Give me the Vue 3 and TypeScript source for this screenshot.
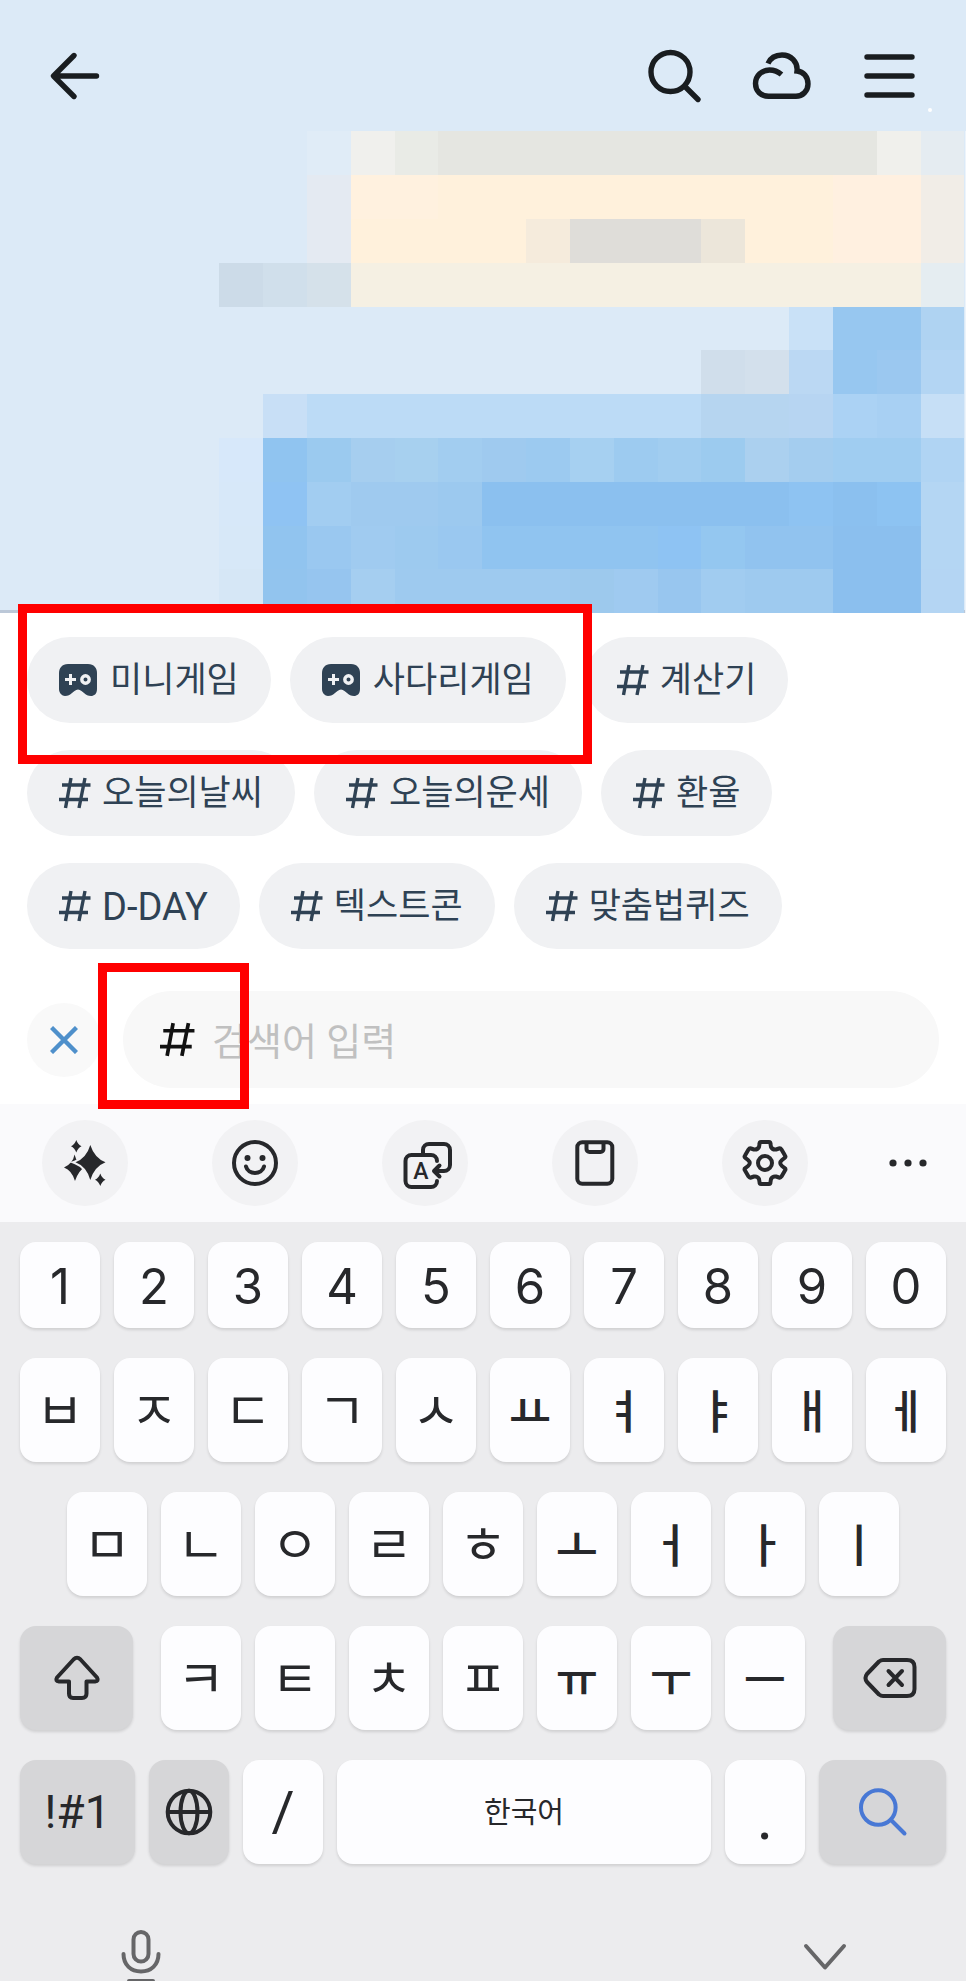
<script setup lang="ts">
import { ref } from 'vue'

interface Tile { x: number; y: number; w: number; h: number; c: string }
interface Chip { label: string; kind?: 'game' | 'latin' }
interface Key { label: string; icon?: string; kind?: string; name?: string }

const query = ref('')

const tiles: Tile[] = []
const add = (y: number, runs: [number, number, string][], h = 1) => {
  for (const [x, w, c] of runs) tiles.push({ x, y, w, h, c })
}
add(3, [[7, 1, '#e0ecf7'], [8, 1, '#f0f0ed'], [9, 1, '#e9ebe6'], [10, 10, '#e5e6e1'], [20, 1, '#f0f0ec'], [21, 1, '#e5ecf1']])
add(4, [[7, 1, '#e4eaf2'], [8, 2, '#fff1df'], [10, 9, '#fff1dc'], [19, 2, '#fff0e0'], [21, 1, '#f1ede7']])
add(5, [[7, 1, '#e4eaf2'], [8, 4, '#fff1dc'], [12, 1, '#f5ebdc'], [13, 3, '#dfddd9'], [16, 1, '#ece6da'], [17, 2, '#fff1dc'], [19, 2, '#fff0e0'], [21, 1, '#f1ede7']])
add(6, [[5, 1, '#ccdbe8'], [6, 1, '#d0dfeb'], [7, 1, '#d5e1ea'], [8, 13, '#f5f0e3'], [21, 1, '#e5edf1']])
add(7, [[18, 1, '#c9e1f7'], [19, 2, '#97c7f0'], [21, 1, '#afd3f2']])
add(8, [[16, 1, '#d0deeb'], [17, 1, '#d3e0ec'], [18, 1, '#bbd8f3'], [19, 1, '#97c7f0'], [20, 1, '#9bc8f0'], [21, 1, '#b3d5f3']])
add(9, [[6, 1, '#c8dff6'], [7, 9, '#bcdbf6'], [16, 2, '#b6d5f0'], [18, 1, '#b7d5f2'], [19, 1, '#abd2f4'], [20, 1, '#a8d0f3'], [21, 1, '#c6dff6']])
add(10, [[5, 1, '#d7e8fa'], [6, 1, '#90c4f0'], [7, 1, '#9bcaef'], [8, 1, '#a6ceef'], [9, 1, '#a7d0ef'], [10, 1, '#a2cdf0'], [11, 1, '#9fcaef'], [12, 1, '#9ccaf0'], [13, 1, '#a6d0f1'], [14, 1, '#9dcbf0'], [15, 1, '#a1cdf0'], [16, 1, '#9ccbef'], [17, 1, '#abd0ef'], [18, 1, '#a4cdef'], [19, 2, '#a0cdf1'], [21, 1, '#b0d4f3']])
add(11, [[5, 1, '#d7e8f9'], [6, 1, '#8fc3f3'], [7, 1, '#a2cdf1'], [8, 2, '#9fcaef'], [10, 1, '#9cc9ef'], [11, 7, '#8bc0ef'], [18, 1, '#8ec3f2'], [19, 1, '#8bc0ef'], [20, 1, '#8dc3f2'], [21, 1, '#b4d6f3']])
add(12, [[5, 1, '#d7e8f8'], [6, 1, '#91c4ef'], [7, 1, '#9ac8f0'], [8, 1, '#a0cbf0'], [9, 1, '#9dcaef'], [10, 1, '#9ac8f0'], [11, 4, '#90c4f0'], [15, 1, '#8ec3f3'], [16, 1, '#94c7f0'], [17, 2, '#91c3ef'], [19, 2, '#8bbfee'], [21, 1, '#b4d6f3']])
add(13, [[5, 1, '#d6e7f6'], [6, 1, '#92c4ee'], [7, 1, '#96c5ef'], [8, 1, '#a5cef0'], [9, 4, '#9ecaef'], [13, 1, '#9dc9ed'], [14, 1, '#9fcaf0'], [15, 1, '#98c6ef'], [16, 1, '#a1ccf0'], [17, 2, '#9ecaef'], [19, 2, '#8bbfee'], [21, 1, '#b4d5f3']])

const chips: Chip[] = [
  { label: '미니게임', kind: 'game' },
  { label: '사다리게임', kind: 'game' },
  { label: '계산기' },
  { label: '오늘의날씨' },
  { label: '오늘의운세' },
  { label: '환율' },
  { label: 'D-DAY', kind: 'latin' },
  { label: '텍스트콘' },
  { label: '맞춤법퀴즈' },
]

const plain = (text: string, kind = ''): Key[] => [...text].map((label) => ({ label, kind }))

const rows: { name: string; keys: Key[] }[] = [
  { name: 'digits', keys: plain('1234567890', 'digit') },
  { name: 'letters', keys: [...plain('ㅂㅈㄷㄱㅅ', 'jamo'), ...plain('ㅛㅕㅑㅐㅔ', 'jamo vowel')] },
  { name: 'letters inset', keys: [...plain('ㅁㄴㅇㄹㅎ', 'jamo'), ...plain('ㅗㅓㅏㅣ', 'jamo vowel')] },
  {
    name: 'letters',
    keys: [
      { label: '', icon: 'shift', kind: 'dark side first', name: 'Shift' },
      ...plain('ㅋㅌㅊㅍ', 'jamo'),
      ...plain('ㅠㅜㅡ', 'jamo vowel'),
      { label: '', icon: 'erase', kind: 'dark side last', name: '지우기' },
    ],
  },
  {
    name: 'letters',
    keys: [
      { label: '!#1', kind: 'dark symbols' },
      { label: '', icon: 'globe', kind: 'dark', name: '언어 변경' },
      { label: '/', kind: 'slash' },
      { label: '한국어', kind: 'space' },
      { label: '.', kind: 'dot' },
      { label: '', icon: 'search', kind: 'dark enter', name: '검색' },
    ],
  },
]
</script>

<template>
  <main class="page">
    <section class="chat">
      <svg class="mosaic" viewBox="0 0 966 613" preserveAspectRatio="none" aria-hidden="true">
        <rect width="966" height="613" fill="#dceaf7" />
        <rect y="610" width="966" height="3" fill="#bcc8d8" />
        <g transform="scale(43.84 43.8)" shape-rendering="crispEdges">
          <rect v-for="(t, i) in tiles" :key="i" :x="t.x" :y="t.y" :width="t.w" :height="t.h" :fill="t.c" />
        </g>
        <rect x="965" y="131" width="1" height="482" fill="#edf4fb" />
        <circle cx="930" cy="110" r="2" fill="#fff" />
      </svg>
      <header class="topbar">
        <button class="icon-btn back" aria-label="뒤로">
          <svg class="line" viewBox="0 0 64 64"><path d="M53.500 32H11M31 11.500L10.500 32L31 52.500" /></svg>
        </button>
        <button class="icon-btn" aria-label="검색">
          <svg class="line" viewBox="0 0 64 64"><circle cx="28.500" cy="28" r="19.500" /><path d="M43 42.500L56 55.500" /></svg>
        </button>
        <button class="icon-btn" aria-label="클라우드">
          <svg class="line butt" viewBox="0 0 64 64">
            <path d="M18 19.500C20.500 14 26 11 32 11C41 11 48 18 47 27C53.500 27.500 58 33 58 40C58 47 52.500 52.300 46 52.300H18.500C11 52.300 5.500 47 5.500 39.500C5.500 31.500 12 26 19.500 26C24 26 28 27.500 31.500 30.500" />
          </svg>
        </button>
        <button class="icon-btn" aria-label="메뉴">
          <svg class="line" viewBox="0 0 64 64"><path d="M9 13H54M9 32H54M9 51H54" /></svg>
        </button>
      </header>
    </section>

    <section class="panel">
      <div class="chips">
        <button v-for="c in chips" :key="c.label" class="chip" :class="c.kind">
          <svg v-if="c.kind === 'game'" class="pad" viewBox="0 0 38 32" aria-hidden="true">
            <path fill="#2f4254" d="M9 0H29C35 0 38 4 38 9V25C38 30 35 32 32 32C29 32 27 31 25 29L22.500 27Q19 24 15.500 27L13 29C11 31 9 32 6 32C3 32 0 29 0 25V9C0 4 3 0 9 0Z" />
            <path stroke="#f0f1f3" stroke-width="3" d="M6 15.500H17M11.500 10V21" />
            <circle cx="26.500" cy="15.500" r="3.700" fill="none" stroke="#f0f1f3" stroke-width="3.400" />
          </svg>
          <svg v-else class="hash" viewBox="0 0 32 32" aria-hidden="true">
            <path d="M12 1L6.500 31M26 1L20 31M3 8H31.500M0 22.500H29" />
          </svg>
          <span>{{ c.label }}</span>
        </button>
      </div>
      <form class="search" @submit.prevent>
        <button class="close" type="button" aria-label="닫기">
          <svg viewBox="0 0 28 28"><path d="M1.500 1.500L26.500 26.500M26.500 1.500L1.500 26.500" /></svg>
        </button>
        <label class="field">
          <svg class="hash" viewBox="0 0 32 32" aria-hidden="true">
            <path d="M12 1L6.500 31M26 1L20 31M3 8H31.500M0 22.500H29" />
          </svg>
          <input v-model="query" type="text" placeholder="검색어 입력" aria-label="검색어 입력" />
        </label>
      </form>
      <span class="mark mark-games"></span>
      <span class="mark mark-hash"></span>
    </section>

    <section class="keyboard">
      <div class="tools">
        <button class="tool" aria-label="AI">
          <svg viewBox="0 0 86 86">
            <path fill="#27282b" d="M32.500 34.500Q35 44 42.500 47.500Q36.500 50.500 33 61Q30 50.500 22 47.500Q31 43.500 32.500 34.500Z" />
            <path fill="#27282b" stroke="#f2f2f4" stroke-width="4" paint-order="stroke" d="M48.300 25Q52.500 38 63.500 42.300Q52.500 46.500 48.300 60Q44.500 46.500 33.500 42.300Q44.500 38 48.300 25Z" />
            <path fill="#27282b" d="M34.300 20Q35.800 24.500 39.500 26.300Q35.800 28 34.300 32.500Q32.700 28 29 26.300Q32.700 24.500 34.300 20ZM58.300 53.500Q59.800 58 63.500 59.800Q59.800 61.500 58.300 66Q56.700 61.500 53 59.800Q56.700 58 58.300 53.500Z" />
          </svg>
        </button>
        <button class="tool" aria-label="이모티콘">
          <svg class="glyph" viewBox="0 0 86 86">
            <circle cx="43" cy="43" r="21" />
            <path d="M34 46.500C36 55 50 55 52 46.500" />
            <g fill="#27282b" stroke="none"><circle cx="35.500" cy="38" r="3" /><circle cx="50.500" cy="38" r="3" /></g>
          </svg>
        </button>
        <button class="tool" aria-label="번역">
          <svg class="glyph" viewBox="0 0 86 86">
            <path d="M41 33V30A6 6 0 0 1 47 24H62A6 6 0 0 1 68 30V45A6 6 0 0 1 62 51H53M57.500 45.500L52 51L57.500 56.500" />
            <path d="M55 41V41A6 6 0 0 0 49 35H29.500A6 6 0 0 0 23.500 41V61A6 6 0 0 0 29.500 67H49A6 6 0 0 0 55 61" />
            <text x="39" y="59" text-anchor="middle" class="letter">A</text>
          </svg>
        </button>
        <button class="tool" aria-label="클립보드">
          <svg class="glyph" viewBox="0 0 86 86">
            <rect x="25.300" y="22.300" width="35" height="41.500" rx="5" />
            <path d="M34.500 23V29A3 3 0 0 0 37.500 32H48.500A3 3 0 0 0 51.500 29V23" />
          </svg>
        </button>
        <button class="tool" aria-label="설정">
          <svg class="glyph" viewBox="0 0 86 86">
            <path transform="translate(43 43)" d="M-4 -21H4Q5.500 -21 5.500 -19L6 -16Q7.500 -13 11 -13.500L14 -14.500Q15.500 -15 16.500 -13.500L20 -7.500Q21 -6 19.500 -5L17 -3Q13.500 0 17 3L19.500 5Q21 6 20 7.500L16.500 13.500Q15.500 15 14 14.500L11 13.500Q7.500 13 6 16L5.500 19Q5.500 21 4 21H-4Q-5.500 21 -5.500 19L-6 16Q-7.500 13 -11 13.500L-14 14.500Q-15.500 15 -16.500 13.500L-20 7.500Q-21 6 -19.500 5L-17 3Q-13.500 0 -17 -3L-19.500 -5Q-21 -6 -20 -7.500L-16.500 -13.500Q-15.500 -15 -14 -14.500L-11 -13.500Q-7.500 -13 -6 -16L-5.500 -19Q-5.500 -21 -4 -21Z" />
            <circle cx="43" cy="43" r="7" />
          </svg>
        </button>
        <button class="tool more" aria-label="더보기">
          <svg viewBox="0 0 86 86" fill="#27282b"><circle cx="28" cy="43" r="3.600" /><circle cx="43" cy="43" r="3.600" /><circle cx="58" cy="43" r="3.600" /></svg>
        </button>
      </div>

      <div class="keys">
        <div v-for="(row, r) in rows" :key="r" class="row" :class="row.name">
          <button v-for="(k, i) in row.keys" :key="i" class="key" :class="k.kind" :aria-label="k.name">
            <svg v-if="k.icon === 'shift'" class="glyph" viewBox="0 0 52 52">
              <path d="M22.500 7.500Q26 4 29.500 7.500L46 25.500Q48 29 44 29.500H35.500V41.500Q35.500 46 31 46H22Q18 46 18 41.500V29.500H8Q4 29 6 25.500Z" />
            </svg>
            <svg v-else-if="k.icon === 'erase'" class="glyph wide" viewBox="0 0 60 52">
              <path d="M23 8H47Q54.500 8 54.500 15V37Q54.500 44 47 44H23Q21 44 19 42.500L7 30Q4 26 7 22L19 9.500Q21 8 23 8ZM28.500 19L42 33M42 19L28.500 33" />
            </svg>
            <svg v-else-if="k.icon === 'globe'" class="glyph" viewBox="0 0 52 52">
              <circle cx="26" cy="26" r="21.300" /><ellipse cx="26" cy="26" rx="8.500" ry="21.300" /><path d="M5 26H47" />
            </svg>
            <svg v-else-if="k.icon === 'search'" class="glyph blue" viewBox="0 0 52 52">
              <circle cx="21.300" cy="21.500" r="17.300" /><path d="M34.500 34.500L47.500 47.500" />
            </svg>
            <template v-else>{{ k.label }}</template>
          </button>
        </div>
      </div>

      <footer class="bottom">
        <button class="icon-btn" aria-label="음성 입력">
          <svg class="mic" viewBox="0 0 44 53">
            <rect x="14.500" y="4" width="15" height="29.500" rx="7.500" />
            <path d="M4.500 26C4.500 37 12 43.500 22 43.500S39.500 37 39.500 26M10 53H34" />
          </svg>
        </button>
        <button class="icon-btn" aria-label="키보드 닫기">
          <svg class="down" viewBox="0 0 48 53"><path d="M5 18L24 39.500L43 18" /></svg>
        </button>
      </footer>
    </section>
  </main>
</template>

<style>
body {
  margin: 0;
  background: #ececee;
}
</style>

<style scoped>
.page {
  min-height: 100vh;
  display: flex;
  flex-direction: column;
  font-family: Roboto, "Noto Sans CJK KR", sans-serif;
}
button {
  border: 0;
  margin: 0;
  padding: 0;
  background: none;
  font: inherit;
  color: inherit;
  cursor: pointer;
}
svg {
  display: block;
}
.chat {
  display: grid;
}
.chat > * {
  grid-area: 1 / 1;
}
.mosaic {
  width: 100%;
  height: 613px;
}
.topbar {
  display: flex;
  align-self: start;
  gap: 44px;
  padding: 44px 44px 0 43px;
}
.topbar svg {
  width: 64px;
  height: 64px;
}
.back {
  margin-right: auto;
}
.line {
  fill: none;
  stroke: #191d20;
  stroke-width: 5.4;
  stroke-linecap: round;
  stroke-linejoin: round;
}
.butt {
  stroke-linecap: butt;
  stroke-linejoin: miter;
}
.panel {
  position: relative;
  background: #fff;
  padding: 24px 27px 16px;
}
.chips {
  display: flex;
  flex-wrap: wrap;
  gap: 27px 19px;
}
.chip {
  display: flex;
  align-items: center;
  gap: 11px;
  height: 86px;
  padding: 0 32px;
  border-radius: 43px;
  background: #f0f1f3;
  color: #2f4254;
  font-size: 35px;
  line-height: 48px;
}
.chip span {
  padding-top: 2px;
}
.chip.game {
  gap: 13px;
}
.chip.latin {
  font-size: 38px;
}
.pad {
  width: 38px;
  height: 32px;
}
.hash {
  width: 32px;
  height: 32px;
  fill: none;
  stroke: #2f4254;
  stroke-width: 3.4;
  overflow: visible;
}
.search {
  display: flex;
  align-items: center;
  gap: 22px;
  margin-top: 42px;
}
.close {
  display: grid;
  place-items: center;
  width: 74px;
  height: 74px;
  border-radius: 50%;
  background: #f9f9f9;
}
.close svg {
  width: 28px;
  height: 28px;
  stroke: #4f90cb;
  stroke-width: 4.4;
}
.field {
  flex: 1;
  display: flex;
  align-items: center;
  gap: 17px;
  height: 97px;
  padding: 0 37px;
  border-radius: 49px;
  background: #f8f8f8;
}
.field .hash {
  width: 35px;
  height: 35px;
  stroke: #111;
}
.field input {
  flex: 1;
  min-width: 0;
  border: 0;
  outline: 0;
  padding: 4px 0 0;
  background: none;
  color: #111;
  font: 38px/52px Roboto, "Noto Sans CJK KR", sans-serif;
}
.field input::placeholder {
  color: #c0c0c0;
  opacity: 1;
}
.mark {
  position: absolute;
  box-sizing: border-box;
  border: 9px solid #f00;
  pointer-events: none;
}
.mark-games {
  left: 18px;
  top: -9px;
  width: 574px;
  height: 160px;
}
.mark-hash {
  left: 98px;
  bottom: -5px;
  width: 151px;
  height: 146px;
}
.keyboard {
  background: #ececee;
}
.tools {
  display: grid;
  grid-template-columns: repeat(5, 170fr) 116fr;
  justify-items: center;
  padding: 16px 0;
  background: #fafafc;
}
.tool {
  width: 86px;
  height: 86px;
  border-radius: 50%;
  background: #f2f2f4;
}
.more {
  background: none;
}
.glyph {
  fill: none;
  stroke: #27282b;
  stroke-width: 4;
  stroke-linecap: round;
  stroke-linejoin: round;
}
.letter {
  fill: #27282b;
  stroke: none;
  font: 500 23px Roboto, sans-serif;
}
.keys {
  display: flex;
  flex-direction: column;
  gap: 30px;
  padding: 20px 20px 0;
}
.row {
  display: flex;
  gap: 14px;
}
.inset {
  padding: 0 47px;
}
.key {
  flex: 80 1 0;
  min-width: 0;
  height: 104px;
  display: flex;
  align-items: center;
  justify-content: center;
  border-radius: 16px;
  background: #fdfdff;
  box-shadow: 0 2px 3px rgba(0, 0, 0, 0.12);
  color: #27282b;
  font-size: 50px;
  line-height: 60px;
}
.key.digit {
  height: 86px;
  padding-top: 4px;
  font-family: Inter, sans-serif;
  font-size: 49px;
}
.key.jamo {
  padding-bottom: 4px;
  font-family: "Noto Sans CJK KR", sans-serif;
  font-size: 52px;
}
.key.vowel {
  font-weight: 500;
  font-size: 46px;
}
.key.dark {
  background: #d6d6d8;
}
.key.side {
  flex-grow: 113;
}
.key.first {
  margin-right: 14px;
}
.key.last {
  margin-left: 14px;
}
.key.symbols {
  flex-grow: 115;
  font-size: 46px;
}
.key.slash {
  font-size: 56px;
}
.key.space {
  flex-grow: 374;
  padding-top: 2px;
  font-size: 29px;
}
.key.dot {
  align-items: flex-end;
  padding-bottom: 16px;
  font-size: 64px;
}
.key.enter {
  flex-grow: 127;
}
.key svg {
  width: 52px;
  height: 52px;
}
.key svg.wide {
  width: 60px;
}
.key svg.blue {
  stroke: #4878d5;
}
.bottom {
  display: flex;
  justify-content: space-between;
  padding: 64px 117px 0 119px;
}
.bottom svg {
  height: 53px;
  fill: none;
  stroke: #666668;
  stroke-width: 4;
  stroke-linecap: round;
  stroke-linejoin: round;
}
.mic {
  width: 44px;
}
.down {
  width: 48px;
}
</style>
